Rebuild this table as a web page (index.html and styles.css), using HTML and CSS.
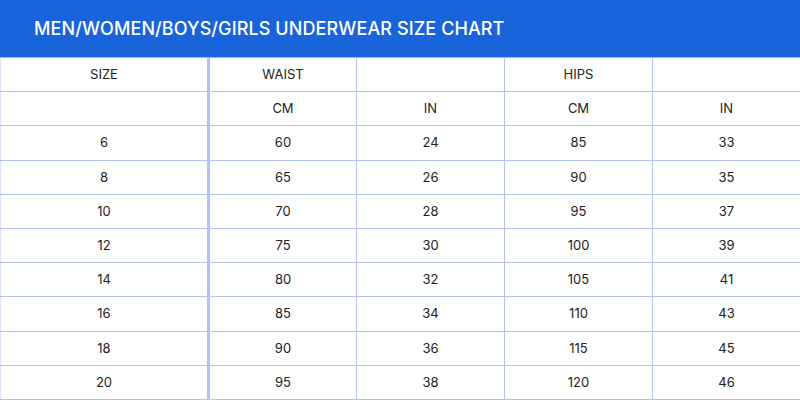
FILE: index.html
```html
<!DOCTYPE html>
<html>
<head>
<meta charset="utf-8">
<link rel="stylesheet" href="styles.css">
</head>
<body>
<div class="page">
  <header class="banner"><h1 class="title">MEN/WOMEN/BOYS/GIRLS UNDERWEAR SIZE CHART</h1></header>
  <table class="chart">
    <colgroup><col class="c-size"><col class="c"><col class="c"><col class="c"><col class="c"></colgroup>
    <tbody>
      <tr><td>SIZE</td><td>WAIST</td><td></td><td>HIPS</td><td></td></tr>
      <tr><td></td><td>CM</td><td>IN</td><td>CM</td><td>IN</td></tr>
      <tr><td>6</td><td>60</td><td>24</td><td>85</td><td>33</td></tr>
      <tr><td>8</td><td>65</td><td>26</td><td>90</td><td>35</td></tr>
      <tr><td>10</td><td>70</td><td>28</td><td>95</td><td>37</td></tr>
      <tr><td>12</td><td>75</td><td>30</td><td>100</td><td>39</td></tr>
      <tr><td>14</td><td>80</td><td>32</td><td>105</td><td>41</td></tr>
      <tr><td>16</td><td>85</td><td>34</td><td>110</td><td>43</td></tr>
      <tr><td>18</td><td>90</td><td>36</td><td>115</td><td>45</td></tr>
      <tr><td>20</td><td>95</td><td>38</td><td>120</td><td>46</td></tr>
    </tbody>
  </table>
</div>
</body>
</html>
```
FILE: styles.css
```css
html, body { margin: 0; padding: 0; background: #fff; }
.page { width: 800px; height: 400px; overflow: hidden; font-family: Inter, "Open Sans", sans-serif; }
.banner { height: 57px; background: #1a64db; display: flex; align-items: center; padding-left: 34px; box-sizing: border-box; }
.title { margin: 0; color: #fff; font-size: 18px; font-weight: 500; letter-spacing: 0.1px; white-space: nowrap; }
.chart { width: 799px; border-collapse: collapse; table-layout: fixed; }
.c-size { width: 208px; }
.c { width: 148px; }
.chart td { height: 33.2px; padding: 0; border: 1px solid #b4c1f6; text-align: center; vertical-align: middle; font-size: 13px; color: #222; line-height: 1; }
.chart td:first-child { border-left: 1px solid #dde3fb; border-right: 3px solid #b4c1f6; }
.chart tr:first-child td { border-top: 1px solid #9fb2f5; }
```
